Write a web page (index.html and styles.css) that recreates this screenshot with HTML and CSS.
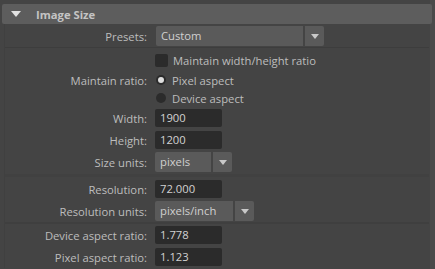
FILE: index.html
```html
<!DOCTYPE html>
<html lang="en">
<head>
  <meta charset="UTF-8" />
  <title>Image Size</title>
  <link rel="stylesheet" href="styles.css">
</head>
<body>

  <div class="panel">
    <div class="section-head">
      <span class="caret"></span>
      <span class="section-title">Image Size</span>
    </div>

    <div class="section-body">
      <div class="row">
        <label class="lbl">Presets:</label>
        <div class="combo">
          <div class="combo-value presets">Custom</div>
          <div class="combo-arrow"><span></span></div>
        </div>
      </div>

      <div class="sep"></div>

      <div class="row">
        <span class="lbl"></span>
        <span class="check"></span>
        <span class="opt-text">Maintain width/height ratio</span>
      </div>

      <div class="row radio-row">
        <label class="lbl">Maintain ratio:</label>
        <span class="radio on"></span>
        <span class="opt-text">Pixel aspect</span>
      </div>
      <div class="row radio-row">
        <span class="lbl"></span>
        <span class="radio"></span>
        <span class="opt-text">Device aspect</span>
      </div>

      <div class="row">
        <label class="lbl">Width:</label>
        <div class="field">1900</div>
      </div>
      <div class="row">
        <label class="lbl">Height:</label>
        <div class="field">1200</div>
      </div>
      <div class="row">
        <label class="lbl">Size units:</label>
        <div class="combo">
          <div class="combo-value units">pixels</div>
          <div class="combo-arrow"><span></span></div>
        </div>
      </div>

      <div class="sep wide"></div>

      <div class="row">
        <label class="lbl">Resolution:</label>
        <div class="field">72.000</div>
      </div>
      <div class="row">
        <label class="lbl">Resolution units:</label>
        <div class="combo">
          <div class="combo-value res-units">pixels/inch</div>
          <div class="combo-arrow"><span></span></div>
        </div>
      </div>

      <div class="sep thick"></div>

      <div class="row">
        <label class="lbl">Device aspect ratio:</label>
        <div class="field">1.778</div>
      </div>
      <div class="row">
        <label class="lbl">Pixel aspect ratio:</label>
        <div class="field">1.123</div>
      </div>
    </div>
  </div>

</body>
</html>
```

FILE: styles.css
```css
body {
  margin: 0;
  padding: 0;
  background-color: #444444;
  font-family: "Open Sans", Arial, sans-serif;
  font-size: 11.25px;
  color: #bdbdbd;
  overflow: hidden;
}

.panel {
  width: 435px;
  height: 269px;
  padding-top: 4px;
  box-sizing: border-box;
  background: linear-gradient(to right, #444444 430px, #4a4a4a 430px);
}

/* collapsible section header */
.section-head {
  margin-left: 2px;
  width: 430px;
  height: 20px;
  background: #5d5d5d;
  border-radius: 2px;
  display: flex;
  align-items: center;
}

.caret {
  width: 0;
  height: 0;
  margin-left: 9px;
  border-left: 5.5px solid transparent;
  border-right: 5.5px solid transparent;
  border-top: 6px solid #e2e2e2;
}

.section-title {
  margin-left: 15px;
  font-weight: bold;
  color: #c4c4c4;
}

.section-body {
  margin-left: 4px;
  width: 424px;
  padding-top: 1px;
  border-left: 1px solid #404040;
}

/* rows */
.row {
  display: flex;
  align-items: center;
  height: 22px;
}

.radio-row {
  height: 18px;
}

.lbl {
  width: 142px;
  margin-right: 8px;
  text-align: right;
  flex-shrink: 0;
}

.sep {
  height: 2px;
  border-top: 1px solid #3d3d3d;
  box-sizing: border-box;
}

.sep.wide {
  height: 5px;
  border-top: none;
  background: linear-gradient(#444444 1px, #414141 1px, #414141 4px, #444444 4px);
}

.sep.thick {
  height: 2px;
  border-top: none;
  background: #3f3f3f;
}

/* inputs */
.field {
  width: 62px;
  height: 18px;
  line-height: 18px;
  padding-left: 5px;
  background: #2b2b2b;
  border-radius: 2px;
  color: #d2d2d2;
}

.combo {
  display: flex;
  height: 20px;
}

.combo-value {
  height: 20px;
  line-height: 20px;
  padding-left: 5px;
  box-sizing: border-box;
  background: #5a5a5a;
  border-radius: 2px 0 0 2px;
  color: #d0d0d0;
}

.presets {
  width: 147px;
  margin-left: 1px;
}

.units {
  width: 56px;
}

.res-units {
  width: 78px;
}

.combo-arrow {
  width: 19px;
  height: 20px;
  margin-left: 2px;
  background: #5a5a5a;
  border-radius: 0 2px 2px 0;
  display: flex;
  align-items: center;
  justify-content: center;
}

.combo-arrow span {
  width: 0;
  height: 0;
  border-left: 4.5px solid transparent;
  border-right: 4.5px solid transparent;
  border-top: 5px solid #c8c8c8;
}

.check {
  width: 13px;
  height: 13px;
  background: #2b2b2b;
  border-radius: 2px;
}

.radio {
  width: 10px;
  height: 10px;
  margin-left: 1px;
  margin-right: 1px;
  background: #2b2b2b;
  border-radius: 50%;
  display: flex;
  align-items: center;
  justify-content: center;
}

.radio.on::after {
  content: "";
  width: 6px;
  height: 6px;
  border-radius: 50%;
  background: #dedede;
}

.opt-text {
  margin-left: 5px;
}
```
